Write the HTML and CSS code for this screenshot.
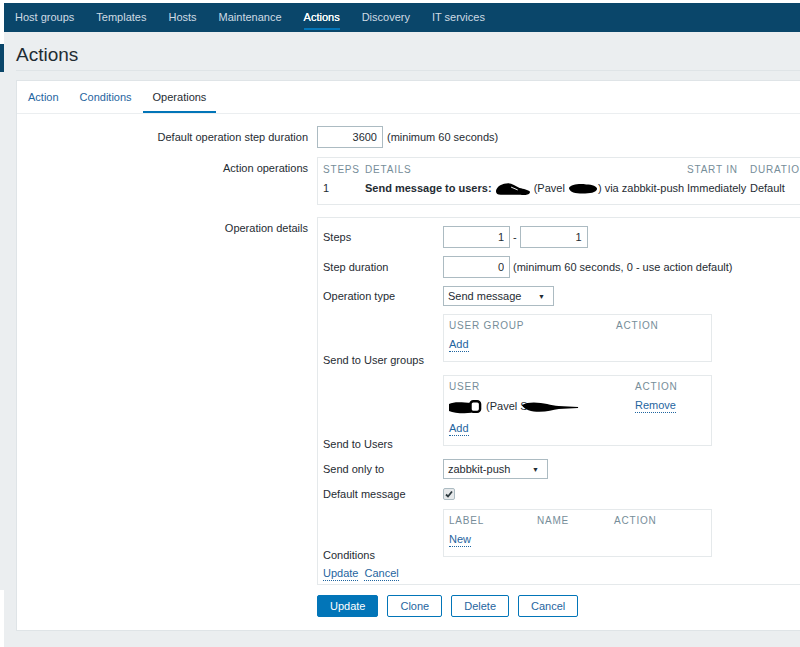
FILE: index.html
```html
<!DOCTYPE html>
<html lang="en">
<head>
  <meta charset="UTF-8">
  <title>Configuration of actions</title>
  <link rel="stylesheet" href="styles.css">
</head>
<body>
  <div class="edge">
    <div class="edge-blank"></div>
    <div class="edge-mark"></div>
    <div class="edge-grey"></div>
  </div>

  <div class="main">
    <nav class="top-nav">
      <a href="#">Host groups</a>
      <a href="#">Templates</a>
      <a href="#">Hosts</a>
      <a href="#">Maintenance</a>
      <a href="#" class="active">Actions</a>
      <a href="#">Discovery</a>
      <a href="#">IT services</a>
    </nav>

    <h1 class="page-title">Actions</h1>

    <div class="panel">
      <ul class="tabs">
        <li><a href="#">Action</a></li>
        <li><a href="#">Conditions</a></li>
        <li class="active">Operations</li>
      </ul>

      <div class="form">
        <div class="form-row">
          <div class="form-label">Default operation step duration</div>
          <div class="form-control">
            <input class="num" type="text" value="3600">
            <span>(minimum 60 seconds)</span>
          </div>
        </div>

        <div class="form-row ops-row">
          <div class="form-label">Action operations</div>
          <div class="table-box ops-box">
            <div class="list-head ops-cols">
              <span>Steps</span><span>Details</span><span>Start in</span><span>Duration</span>
            </div>
            <div class="list-row ops-cols">
              <span>1</span>
              <span class="cell-clip"><b>Send message to users:</b> <svg class="blot" width="36" height="16" viewBox="0 0 38 16"><path d="M1 10 C2 5 8 2 14 2 C18 2 22 5 26 7 C30 8 35 9 37 11 C37 14 33 15 27 14 L6 14 C3 14 1 13 1 10 Z"/><path d="M17 6 L24 9" stroke="#fff" stroke-width="1"/></svg> (Pavel <svg class="blot" width="30" height="13" viewBox="0 0 33 13"><path d="M1 6 C3 2 12 1 20 2 C27 2 32 4 32 7 C31 11 24 12 16 12 C8 12 2 11 1 6 Z"/></svg>) via zabbkit-push</span>
              <span>Immediately</span>
              <span>Default</span>
            </div>
          </div>
        </div>

        <div class="form-row">
          <div class="form-label">Operation details</div>
          <div class="details-box">
            <div class="op-rows">
              <div class="op-row">
                <div class="op-label">Steps</div>
                <div class="op-control">
                  <input class="num num-step" type="text" value="1">
                  <span>-</span>
                  <input class="num num-step wide" type="text" value="1">
                </div>
              </div>

              <div class="op-row">
                <div class="op-label">Step duration</div>
                <div class="op-control">
                  <input class="num num-step" type="text" value="0">
                  <span>(minimum 60 seconds, 0 - use action default)</span>
                </div>
              </div>

              <div class="op-row">
                <div class="op-label">Operation type</div>
                <div class="op-control">
                  <div class="select select-type"><span>Send message</span><span class="arrow">&#9660;</span></div>
                </div>
              </div>

              <div class="op-row boxed">
                <div class="op-label">Send to User groups</div>
                <div class="sub-box">
                  <div class="list-head groups-cols"><span>User group</span><span>Action</span></div>
                  <div class="list-row"><a href="#" class="dotted">Add</a></div>
                </div>
              </div>

              <div class="op-row boxed">
                <div class="op-label">Send to Users</div>
                <div class="sub-box">
                  <div class="list-head users-cols"><span>User</span><span>Action</span></div>
                  <div class="list-row data users-cols">
                    <span class="nowrap"><svg class="blot" width="34" height="16" viewBox="0 0 35 16"><path d="M0 5 C5 2 14 3 23 4 L23 14 C14 15 5 14 0 12 Z"/><rect x="22" y="2" width="10" height="11" rx="3" fill="none" stroke="#000" stroke-width="2.5"/></svg> (Pavel S<svg class="blot tail" width="58" height="12" viewBox="0 0 60 12"><path d="M0 4 C6 0 18 1 26 3 C30 4 34 5 38 5 L58 6 L58 7 L38 8 C32 9 26 11 18 11 C10 11 2 9 0 4 Z"/></svg></span>
                    <a href="#" class="dotted">Remove</a>
                  </div>
                  <div class="list-row"><a href="#" class="dotted">Add</a></div>
                </div>
              </div>

              <div class="op-row">
                <div class="op-label">Send only to</div>
                <div class="op-control">
                  <div class="select select-media"><span>zabbkit-push</span><span class="arrow">&#9660;</span></div>
                </div>
              </div>

              <div class="op-row">
                <div class="op-label">Default message</div>
                <div class="op-control">
                  <span class="check"><svg width="8" height="8" viewBox="0 0 8 8"><path d="M1 4.5 L3 6.5 L7 1.5" fill="none" stroke="#2e3a40" stroke-width="1.8"/></svg></span>
                </div>
              </div>

              <div class="op-row boxed">
                <div class="op-label">Conditions</div>
                <div class="sub-box">
                  <div class="list-head cond-cols"><span>Label</span><span>Name</span><span>Action</span></div>
                  <div class="list-row"><a href="#" class="dotted">New</a></div>
                </div>
              </div>

              <div class="op-links">
                <a href="#" class="dotted">Update</a>
                <a href="#" class="dotted">Cancel</a>
              </div>
            </div>
          </div>
        </div>

        <div class="form-row buttons-row">
          <div></div>
          <div class="buttons">
            <button class="btn btn-primary">Update</button>
            <button class="btn">Clone</button>
            <button class="btn">Delete</button>
            <button class="btn">Cancel</button>
          </div>
        </div>
      </div>
    </div>
  </div>
</body>
</html>
```

FILE: styles.css
```css
* {
  margin: 0;
  padding: 0;
  box-sizing: border-box;
}
body {
  font-family: "Liberation Sans", Arial, sans-serif;
  font-size: 11px;
  color: #1f2c33;
  background: #fff;
  display: flex;
  height: 647px;
  overflow: hidden;
}
ul {
  list-style: none;
}
a {
  color: #1f65a0;
  text-decoration: none;
}
b {
  font-weight: bold;
}
.nowrap {
  white-space: nowrap;
}

/* left edge of the capture */
.edge {
  flex: 0 0 4px;
  display: flex;
  flex-direction: column;
}
.edge-blank {
  height: 44px;
}
.edge-mark {
  height: 28px;
  background: #0a466a;
}
.edge-grey {
  height: 518px;
  background: #ebeef0;
}

.main {
  flex: 1;
  min-width: 0;
  margin-top: 3px;
  background: #ebeef0;
  overflow: hidden;
}

/* top menu */
.top-nav {
  display: flex;
  height: 29px;
  background: #0a466a;
}
.top-nav a {
  position: relative;
  padding: 0 11px;
  line-height: 29px;
  color: #cfdbe4;
  white-space: nowrap;
}
.top-nav a.active {
  color: #fff;
  text-shadow: 0 0 0.4px #fff;
}
.top-nav a.active::after {
  content: "";
  position: absolute;
  left: 11px;
  right: 11px;
  bottom: 2px;
  height: 2px;
  background: #0275b8;
}

.page-title {
  margin-left: 12px;
  height: 39px;
  padding-top: 8px;
  border-bottom: 1px solid #dfe4e7;
  font-size: 19px;
  line-height: 30px;
  font-weight: normal;
}

.panel {
  margin: 9px 0 0 12px;
  background: #fff;
  border: 1px solid #dfe4e7;
  border-right: 0;
  padding-bottom: 13px;
}

/* tabs */
.tabs {
  display: flex;
  padding-left: 1px;
  border-bottom: 1px solid #ebeef0;
}
.tabs li {
  height: 32px;
  padding: 0 10px;
  line-height: 32px;
}
.tabs li + li {
  margin-left: 1px;
}
.tabs li.active {
  border-bottom: 2px solid #0275b8;
}

/* form */
.form {
  display: flex;
  flex-direction: column;
  gap: 9px;
  padding-top: 12px;
}
.form-row {
  display: grid;
  grid-template-columns: 291px 1fr;
  column-gap: 9px;
  align-items: start;
}
.form-label {
  text-align: right;
  padding-top: 4px;
  line-height: 14px;
}
.form-control,
.op-control {
  display: flex;
  align-items: center;
  gap: 4px;
  white-space: nowrap;
}
.num {
  width: 66px;
  height: 22px;
  padding: 0 5px;
  border: 1px solid #acbbc2;
  font: inherit;
  color: inherit;
  text-align: right;
  background: #fff;
}
.num-step {
  width: 67px;
}
.num-step.wide {
  width: 68px;
}
.op-control {
  gap: 3px;
}

.table-box,
.sub-box,
.details-box {
  border: 1px solid #e5e9eb;
}
.ops-row {
  margin-bottom: 3px;
}
.ops-box {
  width: 530px;
  padding: 5px 5px 9px;
}
.list-head {
  display: grid;
  font-size: 10px;
  letter-spacing: 0.8px;
  line-height: 14px;
  color: #768d99;
  text-transform: uppercase;
}
.list-row {
  display: grid;
  justify-items: start;
  height: 14px;
  line-height: 14px;
  margin-top: 4px;
}
.ops-cols {
  grid-template-columns: 42px 322px 63px 90px;
}
.cell-clip {
  white-space: nowrap;
  overflow: hidden;
}
.blot {
  vertical-align: middle;
  margin: -4px 0 -3px;
  fill: #000;
}
.blot.tail {
  margin-left: -6px;
}

/* operation details */
.details-box {
  width: 500px;
  padding: 8px 5px 3px;
}
.op-rows {
  display: flex;
  flex-direction: column;
  gap: 8px;
}
.op-row {
  display: grid;
  grid-template-columns: 120px 1fr;
  align-items: center;
}
.op-label {
  line-height: 14px;
}
.op-row.boxed {
  align-items: end;
}
.op-row.boxed .sub-box {
  margin-bottom: 5px;
}
.sub-box {
  width: 269px;
  padding: 4px 5px 9px;
}
.sub-box .list-row {
  margin-top: 5px;
}
.sub-box .list-row.data {
  height: 18px;
  padding-bottom: 4px;
}
.groups-cols {
  grid-template-columns: 167px 1fr;
}
.users-cols {
  grid-template-columns: 186px 1fr;
}
.cond-cols {
  grid-template-columns: 88px 77px 1fr;
}
.dotted {
  border-bottom: 1px dotted #1f65a0;
  line-height: 13px;
}

.select {
  display: flex;
  align-items: center;
  justify-content: space-between;
  height: 20px;
  padding: 0 8px 0 4px;
  border: 1px solid #acbbc2;
  background: #fff;
}
.select-type {
  width: 111px;
}
.select-media {
  width: 105px;
}
.arrow {
  font-size: 7px;
}
.check {
  display: flex;
  align-items: center;
  justify-content: center;
  width: 12px;
  height: 12px;
  border: 1px solid #acbbc2;
  border-radius: 2px;
  background: #e6e9eb;
}
.op-links {
  display: flex;
  align-items: flex-start;
  gap: 6px;
  height: 14px;
  margin-top: -3px;
}

/* buttons */
.buttons-row {
  margin-top: 1px;
}
.buttons {
  display: flex;
  gap: 9px;
}
.btn {
  height: 22px;
  padding: 0 12px;
  border: 1px solid #0275b8;
  border-radius: 2px;
  background: #fff;
  color: #1f65a0;
  font: inherit;
}
.btn-primary {
  background: #0275b8;
  color: #fff;
}
```
